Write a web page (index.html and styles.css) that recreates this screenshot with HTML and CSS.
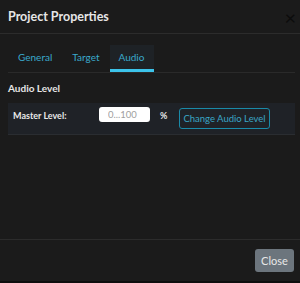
FILE: index.html
```html
<!DOCTYPE html>
<html lang="en">
<head>
    <meta charset="UTF-8">
    <title>Project Properties</title>
    <link rel="stylesheet" href="styles.css">
</head>
<body>
    <div class="dialog">
        <div class="dialog-header">
            <h1>Project Properties</h1>
            <span class="close-x">&times;</span>
        </div>
        <div class="dialog-body">
            <div class="tabs">
                <a class="tab">General</a>
                <a class="tab">Target</a>
                <a class="tab active">Audio</a>
            </div>
            <h2>Audio Level</h2>
            <div class="level-row">
                <label for="master">Master Level:</label>
                <input type="text" id="master" placeholder="0...100">
                <span class="unit">%</span>
                <button class="btn-outline">Change Audio Level</button>
            </div>
        </div>
        <div class="dialog-footer">
            <button class="btn-close">Close</button>
        </div>
    </div>
</body>
</html>
```

FILE: styles.css
```css
html, body {
    margin: 0;
    padding: 0;
    background: #1b1b1b;
}
.dialog {
    width: 300px;
    height: 283px;
    display: flex;
    flex-direction: column;
    font-family: Lato, sans-serif;
    color: #e8e8e8;
    box-sizing: border-box;
    border-bottom: 2px solid #0e0e0e;
}
.dialog-header {
    height: 34px;
    display: flex;
    align-items: center;
    justify-content: space-between;
    padding: 0 8px;
    border-bottom: 1px solid #2c2c2c;
    box-sizing: border-box;
}
.dialog-header h1 {
    margin: 0 0 1px;
    font-size: 12.5px;
    font-weight: 700;
    color: #e6e6e6;
}
.close-x {
    font-size: 20px;
    color: #0c0c0c;
    margin-right: -4px;
}
.dialog-body {
    flex: 1;
    padding: 11px 5px 0 8px;
}
.tabs {
    display: flex;
    border-bottom: 1px solid #2a2a2a;
}
.tab {
    font-size: 10px;
    color: #3aa9cc;
    padding: 5px 10px 5px;
    height: 14px;
    line-height: 14px;
    border-bottom: 3px solid transparent;
}
.tab.active {
    padding-left: 9px;
    background: #1e2226;
    border-bottom-color: #3cc3ea;
}
h2 {
    margin: 9px 0 9px;
    font-size: 10px;
    font-weight: 700;
    color: #e6e6e6;
}
.level-row {
    display: flex;
    align-items: flex-start;
    height: 32px;
    box-sizing: border-box;
    background: #1f2227;
    border-bottom: 1px solid #2a2d31;
    padding: 4px 0 0 5px;
    font-size: 9px;
}
.level-row label {
    font-weight: 700;
    width: 86px;
    margin-top: 3px;
}
.level-row input {
    width: 51px;
    height: 15px;
    box-sizing: border-box;
    border: none;
    border-radius: 3px;
    padding: 0 0 0 9px;
    font: inherit;
    font-size: 9.5px;
}
.level-row input::placeholder {
    color: #a0a0a0;
}
.unit {
    font-weight: 700;
    margin: 3px 0 0 10px;
    width: 19px;
}
.btn-outline {
    background: transparent;
    border: 1px solid #1a8aa8;
    color: #3aa6c6;
    border-radius: 3px;
    font: inherit;
    font-size: 9.5px;
    white-space: nowrap;
    height: 21px;
    width: 91px;
    padding: 0;
    margin-top: 1px;
}
.dialog-footer {
    height: 42px;
    border-top: 1px solid #2c2c2c;
    display: flex;
    justify-content: flex-end;
    align-items: flex-start;
    padding: 9px 6px 0 0;
    box-sizing: border-box;
}
.btn-close {
    background: #6c757d;
    color: #e8e8e8;
    border: none;
    border-radius: 3px;
    font: inherit;
    font-size: 11px;
    width: 39px;
    height: 23px;
    padding: 0;
}
```
